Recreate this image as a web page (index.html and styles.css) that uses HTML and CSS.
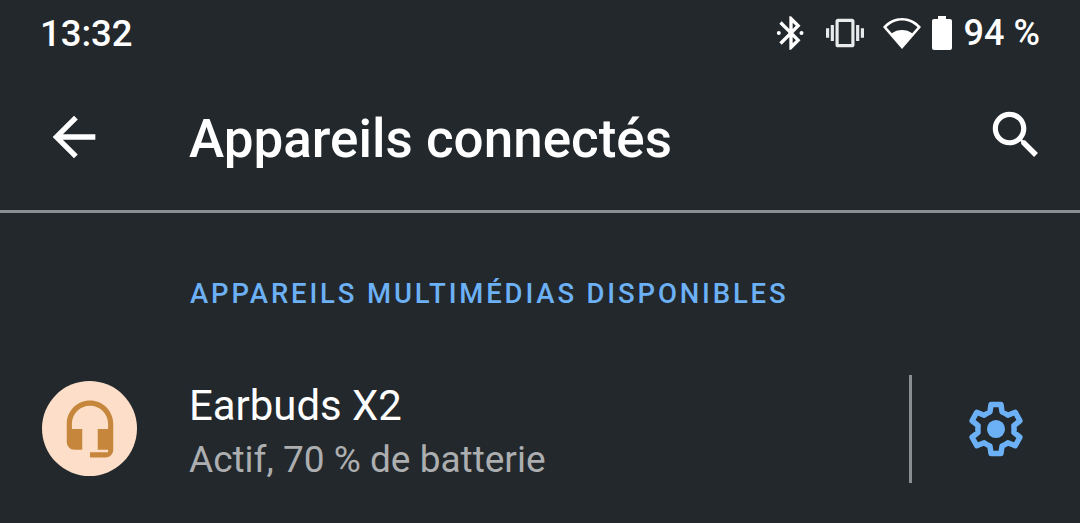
FILE: index.html
```html
<!DOCTYPE html>
<html lang="fr">
<head>
    <meta charset="UTF-8">
    <meta name="viewport" content="width=device-width, initial-scale=1.0">
    <title>Appareils connectés</title>
    <link rel="stylesheet" href="styles.css">
</head>
<body>

    <!-- Status bar -->
    <div class="status-bar">
        <span class="clock">13:32</span>
        <div class="status-icons">
            <svg class="icon-bluetooth" viewBox="0 0 24 24"><path d="M17.71 7.71L12 2h-1v7.59L6.41 5 5 6.41 10.59 12 5 17.59 6.41 19 11 14.41V22h1l5.71-5.71-4.3-4.29 4.3-4.29zM13 5.83l1.88 1.88L13 9.59V5.83zm1.88 10.46L13 18.17v-3.76l1.88 1.88z"/><circle cx="4.7" cy="12" r="1.2"/><circle cx="18.3" cy="12" r="1.2"/></svg>
            <svg class="icon-vibrate" viewBox="0 0 24 24"><path d="M0 15h2V9H0v6zm3 2h2V7H3v10zm19-8v6h2V9h-2zm-3 8h2V7h-2v10zM16.5 3h-9C6.67 3 6 3.67 6 4.5v15c0 .83.67 1.5 1.5 1.5h9c.83 0 1.5-.67 1.5-1.5v-15c0-.83-.67-1.5-1.5-1.5zM16 19H8V5h8v14z"/></svg>
            <svg class="icon-wifi" viewBox="0 0 40 34"><path d="M20 33L1 11C6 5 13 2 20 2s14 3 19 9L20 33zM4.500 11.200L9.800 17.300C12.600 15.200 16.200 14 20 14s7.400 1.200 10.200 3.300l5.300-6.100C31.300 7 25.800 4.500 20 4.500S8.700 7 4.500 11.200z" fill-rule="evenodd"/></svg>
            <svg class="icon-battery" viewBox="0 0 20 34"><path d="M6 0h8v3h4c1.100 0 2 .9 2 2v27c0 1.100-.9 2-2 2H2c-1.100 0-2-.9-2-2V5c0-1.100.9-2 2-2h4V0z"/></svg>
            <span class="battery-level">94 %</span>
        </div>
    </div>

    <!-- Toolbar -->
    <header class="toolbar">
        <svg class="icon-back" viewBox="0 0 24 24"><path d="M20 11H7.830l5.590-5.590L12 4l-8 8 8 8 1.410-1.410L7.830 13H20v-2z"/></svg>
        <h1 class="toolbar-title">Appareils connectés</h1>
        <svg class="icon-search" viewBox="0 0 24 24"><path d="M15.500 14h-.790l-.280-.270C15.410 12.590 16 11.110 16 9.500 16 5.910 13.090 3 9.500 3S3 5.910 3 9.500 5.910 16 9.500 16c1.610 0 3.090-.590 4.230-1.570l.270.280v.790l5 4.990L20.490 19l-4.990-5zm-6 0C7.010 14 5 11.990 5 9.500S7.010 5 9.500 5 14 7.010 14 9.500 11.990 14 9.500 14z"/></svg>
    </header>

    <!-- Device list -->
    <section class="device-section">
        <h2 class="section-title">APPAREILS MULTIMÉDIAS DISPONIBLES</h2>
        <div class="device-row">
            <div class="device-avatar">
                <svg class="icon-headset" viewBox="0 0 24 24"><path d="M12 1c-4.970 0-9 4.030-9 9v7c0 1.660 1.340 3 3 3h3v-8H5v-2c0-3.870 3.130-7 7-7s7 3.130 7 7v2h-4v8h4v1h-7v2h6c1.660 0 3-1.340 3-3V10c0-4.970-4.030-9-9-9z"/></svg>
            </div>
            <div class="device-info">
                <div class="device-name">Earbuds X2</div>
                <div class="device-status">Actif, 70 % de batterie</div>
            </div>
            <div class="device-action">
                <svg class="icon-gear" viewBox="0 0 24 24"><path d="M10.200 3.100H13.800L14.200 5.800C15 6.100 15.700 6.500 16.300 7L19 5.900L20.700 9L18.500 10.800C18.600 11.600 18.600 12.400 18.500 13.200L20.700 15L19 18.100L16.300 17C15.700 17.500 15 17.900 14.200 18.200L13.800 20.900H10.200L9.800 18.200C9 17.900 8.300 17.500 7.700 17L5 18.100L3.300 15L5.500 13.200C5.400 12.400 5.400 11.600 5.500 10.800L3.300 9L5 5.900L7.700 7C8.300 6.500 9 6.100 9.800 5.800Z"/><circle cx="12" cy="12" r="3.300"/></svg>
            </div>
        </div>
    </section>

</body>
</html>
```

FILE: styles.css
```css
/* General Styles */
body {
    margin: 0;
    height: 523px;
    overflow: hidden;
    background: #22282c;
    color: #fff;
    font-family: Roboto, sans-serif;
}
svg {
    display: block;
    fill: currentColor;
    flex: none;
}

/* Status bar */
.status-bar {
    height: 66px;
    display: flex;
    align-items: center;
    justify-content: space-between;
    padding: 0 40px;
}
.clock {
    font-size: 36.5px;
    font-weight: 500;
}
.status-icons {
    display: flex;
    align-items: center;
}
.icon-bluetooth {
    width: 40px;
    height: 40px;
}
.icon-vibrate {
    width: 38px;
    height: 38px;
    margin-left: 15px;
    color: #e9eaeb;
}
.icon-wifi {
    width: 40px;
    height: 34px;
    margin-left: 18px;
}
.icon-battery {
    width: 20px;
    height: 34px;
    margin-left: 10px;
}
.battery-level {
    font-size: 36px;
    font-weight: 500;
    margin-left: 12px;
}

/* Toolbar */
.toolbar {
    height: 144px;
    display: flex;
    align-items: center;
    border-bottom: 3px solid #8b8e90;
}
.icon-back {
    width: 64px;
    height: 64px;
    margin-left: 42px;
    margin-bottom: 2px;
}
.toolbar-title {
    flex: 1;
    margin: 2px 0 0 83px;
    font-size: 53px;
    font-weight: 500;
}
.icon-search {
    width: 62px;
    height: 62px;
    margin: 0 33px 6px 0;
}

/* Device list */
.section-title {
    margin: 65px 0 0 190px;
    font-size: 27.5px;
    line-height: 32px;
    font-weight: 500;
    letter-spacing: 2.85px;
    color: #6cb0f5;
}
.device-row {
    display: flex;
    align-items: center;
    height: 108px;
    margin-top: 65px;
}
.device-avatar {
    width: 95px;
    height: 95px;
    margin-left: 42px;
    margin-bottom: 1px;
    border-radius: 50%;
    background: #fddfc9;
    color: #c6873c;
    display: flex;
    align-items: center;
    justify-content: center;
}
.icon-headset {
    width: 62px;
    height: 62px;
}
.device-info {
    flex: 1;
    margin-left: 53px;
    padding-top: 3px;
}
.device-name {
    font-size: 41.9px;
    line-height: 54px;
    margin-left: -1px;
}
.device-status {
    font-size: 37px;
    line-height: 46px;
    margin: 4px 0 0 -1px;
    color: #acaeb0;
}
.device-action {
    height: 108px;
    width: 171px;
    box-sizing: border-box;
    border-left: 3px solid #8b8e90;
    display: flex;
    align-items: center;
    padding-left: 51px;
}
.icon-gear {
    width: 66px;
    height: 66px;
    color: #6cb0f5;
}
.icon-gear path {
    fill: none;
    stroke: currentColor;
    stroke-width: 2;
    stroke-linejoin: round;
}
```
